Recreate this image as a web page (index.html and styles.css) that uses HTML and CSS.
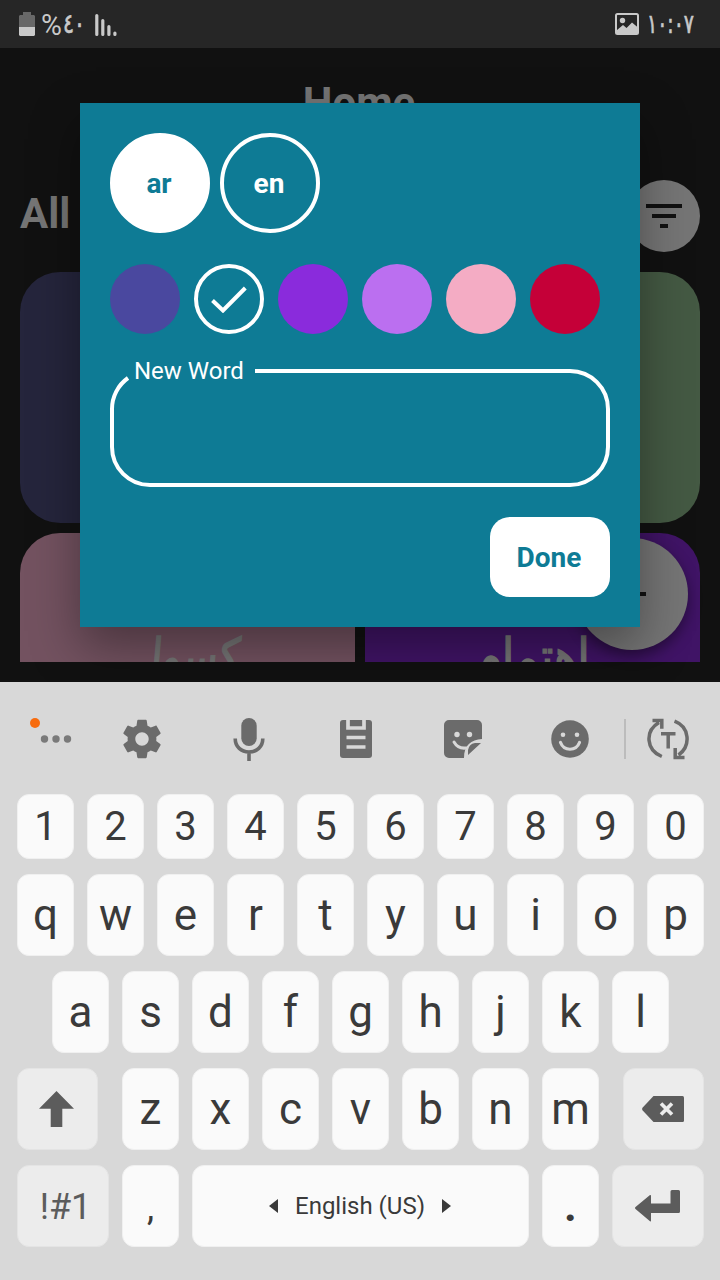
FILE: index.html
```
<!DOCTYPE html>
<html lang="en">
<head>
<meta charset="utf-8">
<title>New Word</title>
<link rel="stylesheet" href="styles.css">
</head>
<body>
<div class="phone">
  <header class="status">
    <div class="status-side">
      <svg class="battery" width="16" height="24" viewBox="0 0 16 24"><path fill="#686868" d="M4 0h8v3h3l1 1v11H0V4l1-1h3z"/><path fill="#c9c9c9" d="M0 15h16v8l-1 1H1l-1-1z"/></svg>
      <span class="percent"><span class="sign">%</span><span class="num">٤٠</span></span>
      <svg class="signal" width="22" height="24" viewBox="0 0 22 24" fill="none" stroke="#c9c9c9" stroke-width="3.2" stroke-linecap="round"><path d="M1.8 2.5v19M7.8 7.500v14M13.900 13.500v8M19.900 20v1.500"/></svg>
    </div>
    <div class="status-side status-right">
      <svg width="24" height="22" viewBox="0 0 24 22"><rect x="1" y="1" width="22" height="20" rx="1.500" fill="none" stroke="#c9c9c9" stroke-width="2"/><circle cx="7.500" cy="7.500" r="2.700" fill="#c9c9c9"/><path fill="#c9c9c9" d="M2 17l6-5 3.500 3L17 9.500l6 5V21H2z"/></svg>
      <span class="clock">١٠:٠٧</span>
    </div>
  </header>

  <main class="app">
    <h1 class="title">Home</h1>
    <div class="heading">
      <h2 class="all">All</h2>
      <div class="filter"><svg width="36" height="24" viewBox="0 0 36 24" fill="#111"><path d="M0 0h36v4H0zM6 10h24v4H6zM14 20h8v4h-8z"/></svg></div>
    </div>
    <div class="cards">
      <div class="card indigo"></div>
      <div class="card green"></div>
      <div class="card pink"><span class="word lazy" lang="ar">كسول</span></div>
      <div class="card purple"><span class="word care" lang="ar">اهتمام</span></div>
    </div>
    <div class="fab"><svg width="28" height="28" viewBox="0 0 28 28" fill="#111"><path d="M12 0h4v12h12v4H16v12h-4V16H0v-4h12z"/></svg></div>

    <section class="dialog">
      <div class="langs">
        <div class="lang selected">ar</div>
        <div class="lang">en</div>
      </div>
      <div class="colors">
        <div class="dot c-indigo"></div>
        <div class="dot checked"><svg width="36" height="27" viewBox="0 0 36 27" fill="none" stroke="#fff" stroke-width="4"><path d="M1.500 14.500l10.500 10L34.300 2"/></svg></div>
        <div class="dot c-violet"></div>
        <div class="dot c-lilac"></div>
        <div class="dot c-pink"></div>
        <div class="dot c-red"></div>
      </div>
      <div class="field">
        <svg width="500" height="118" viewBox="0 0 500 118" fill="none" stroke="#fff" stroke-width="4"><path d="M145 2H460A38 38 0 0 1 498 40V78A38 38 0 0 1 460 116H40A38 38 0 0 1 2 78V40A38 38 0 0 1 18 9"/></svg>
        <label class="label">New Word</label>
      </div>
      <div class="done">Done</div>
    </section>
  </main>

  <section class="keyboard">
    <div class="tools">
      <div class="tool more"><svg width="50" height="40" viewBox="0 0 50 40"><circle cx="9" cy="8" r="5" fill="#f76c0f"/><g fill="#7a7a7a"><circle cx="18.500" cy="24" r="3.700"/><circle cx="30" cy="24" r="3.700"/><circle cx="41.500" cy="24" r="3.700"/></g></svg></div>
      <div class="tool"><svg width="46" height="46" viewBox="0 0 24 24" fill="#6b6b6b"><path d="M19.430 12.980c.04-.32.07-.64.07-.98s-.03-.66-.07-.98l2.110-1.650c.19-.15.24-.42.12-.64l-2-3.460c-.12-.22-.39-.3-.61-.22l-2.490 1c-.52-.4-1.080-.73-1.690-.98l-.38-2.650C14.460 2.180 14.250 2 14 2h-4c-.25 0-.46.18-.49.42l-.38 2.650c-.61.25-1.170.59-1.690.98l-2.490-1c-.23-.09-.49 0-.61.22l-2 3.460c-.13.22-.07.49.12.64l2.110 1.650c-.04.32-.07.65-.07.98s.03.66.07.98l-2.110 1.650c-.19.15-.24.42-.12.64l2 3.460c.12.22.39.3.61.22l2.490-1c.52.4 1.080.73 1.690.98l.38 2.650c.03.24.24.42.49.42h4c.25 0 .46-.18.49-.42l.38-2.650c.61-.25 1.170-.59 1.690-.98l2.490 1c.23.09.49 0 .61-.22l2-3.460c.12-.22.07-.49-.12-.64l-2.110-1.650zM12 15.500c-1.930 0-3.500-1.570-3.500-3.500s1.570-3.500 3.500-3.500 3.500 1.570 3.500 3.500-1.570 3.500-3.500 3.500z"/></svg></div>
      <div class="tool"><svg width="32" height="43" viewBox="0 0 32 43"><rect x="8.300" y="0" width="15.400" height="28" rx="7.700" fill="#6b6b6b"/><path d="M2.200 20.500C2.200 29 8.300 34 16 34s13.800-5 13.800-13.500M16 34v9" fill="none" stroke="#6b6b6b" stroke-width="3.600"/></svg></div>
      <div class="tool"><svg width="32" height="38" viewBox="0 0 32 38"><rect width="32" height="38" rx="3" fill="#6b6b6b"/><path d="M8 0v8h16V0M6.500 17.500h19M6.500 27h19" fill="none" stroke="#d8d8d8" stroke-width="3.700"/></svg></div>
      <div class="tool"><svg width="38" height="38" viewBox="0 0 38 38"><path fill="#6b6b6b" d="M5 0h28a5 5 0 0 1 5 5v14C27 20 20 25 20 38H5a5 5 0 0 1-5-5V5a5 5 0 0 1 5-5zM24 35v-5q1-6 7-7h6z"/><g fill="#d8d8d8"><circle cx="13" cy="14.500" r="2.700"/><circle cx="25.500" cy="14.500" r="2.700"/></g><path d="M10 22q4 7 12 6" fill="none" stroke="#d8d8d8" stroke-width="3" stroke-linecap="round"/></svg></div>
      <div class="tool"><svg width="38" height="38" viewBox="0 0 38 38"><circle cx="19" cy="19" r="18.800" fill="#6b6b6b"/><g fill="#d8d8d8"><circle cx="12" cy="14.700" r="2.300"/><circle cx="26" cy="14.700" r="2.300"/></g><path d="M9.500 22.500C13 31.500 25 31.500 28.500 22.500" fill="none" stroke="#d8d8d8" stroke-width="3.200" stroke-linecap="round"/></svg></div>
      <div class="divider"></div>
      <div class="tool swap"><svg width="42" height="42" viewBox="0 0 42 42" fill="none" stroke="#6b6b6b" stroke-width="3.500"><path d="M14.800 38.500C-1 32-2.500 13 12 4.500M5.500 2.500h9.300v8.300M27.500 3.200C43 9 44 28 31.500 37M37.500 39.500h-9.300v-9.500M14 15.700h14.500M21.200 15.500v15"/></svg></div>
    </div>

    <div class="row digits">
      <div class="key">1</div><div class="key">2</div><div class="key">3</div><div class="key">4</div><div class="key">5</div><div class="key">6</div><div class="key">7</div><div class="key">8</div><div class="key">9</div><div class="key">0</div>
    </div>
    <div class="row">
      <div class="key">q</div><div class="key">w</div><div class="key">e</div><div class="key">r</div><div class="key">t</div><div class="key">y</div><div class="key">u</div><div class="key">i</div><div class="key">o</div><div class="key">p</div>
    </div>
    <div class="row home-row">
      <div class="key">a</div><div class="key">s</div><div class="key">d</div><div class="key">f</div><div class="key">g</div><div class="key">h</div><div class="key">j</div><div class="key">k</div><div class="key">l</div>
    </div>
    <div class="row outer">
      <div class="key fn nudge"><svg width="35" height="36" viewBox="0 0 35 36" fill="#5c5c5c"><path d="M17.500 0L35 17.700H23.300V36H11.700V17.700H0z"/></svg></div>
      <div class="letters"><div class="key">z</div><div class="key">x</div><div class="key">c</div><div class="key">v</div><div class="key">b</div><div class="key">n</div><div class="key">m</div></div>
      <div class="key fn nudge"><svg width="42" height="26" viewBox="0 0 42 26"><path fill="#5c5c5c" d="M11.500 0H40.500Q42 0 42 1.500V24.500Q42 26 40.500 26H11.500L.7 14.500Q-.5 13 .7 11.500z"/><path d="M19 7.500l11 11M30 7.500l-11 11" stroke="#ececec" stroke-width="3.600"/></svg></div>
    </div>
    <div class="row">
      <div class="key fn wide symbols">!#1</div>
      <div class="key comma">,</div>
      <div class="key space">
        <svg width="9" height="14" viewBox="0 0 9 14" fill="#3a3a3a"><path d="M9 0v14L0 7z"/></svg>
        <span>English (US)</span>
        <svg width="9" height="14" viewBox="0 0 9 14" fill="#3a3a3a"><path d="M0 0v14l9-7z"/></svg>
      </div>
      <div class="key period">.</div>
      <div class="key fn wide nudge"><svg class="enter" width="45" height="32" viewBox="0 0 45 32" fill="#5c5c5c"><path d="M.5 17L15 5Q16 4.500 16 6v7.500H35.500V1.500Q35.500 0 37 0h6.500Q45 0 45 1.500v20q0 1.500-1.500 1.500H16v7.500q0 1.500-1 .8L.5 19q-1-1 0-2z"/></svg></div>
    </div>
  </section>
</div>
</body>
</html>
```
FILE: styles.css
```
* { box-sizing: border-box; }
body { margin: 0; font-family: Roboto, "DejaVu Sans", sans-serif; }
svg { display: block; flex: none; }
.phone { width: 720px; height: 1280px; display: flex; flex-direction: column; overflow: hidden; background: #111; }

.status { height: 48px; flex: none; background: #262626; color: #c9c9c9; display: flex; justify-content: space-between; align-items: center; padding: 0 26px 0 19px; }
.status-side { display: flex; align-items: center; height: 48px; }
.percent { display: flex; align-items: center; margin-left: 6px; width: 43px; direction: ltr; }
.sign { font-size: 30px; line-height: 32px; width: 22px; flex: none; padding-top: 1px; transform: scaleX(.95); transform-origin: left; }
.num { font: 27px/30px "DejaVu Sans", sans-serif; unicode-bidi: bidi-override; transform: scaleX(.76); transform-origin: left; -webkit-text-stroke: .7px #c9c9c9; }
.signal { margin: 1px 0 0 11px; }
.clock { font: 27px/30px "DejaVu Sans", sans-serif; width: 47px; margin-left: 8px; direction: ltr; unicode-bidi: bidi-override; white-space: nowrap; transform: scaleX(.7); transform-origin: left; -webkit-text-stroke: .7px #c9c9c9; }

.app { position: relative; height: 634px; flex: none; overflow: hidden; padding: 30px 20px 20px; color: #757575; }
.title { margin: 0; font-size: 42px; line-height: 50px; text-align: center; padding-right: 2px; }
.heading { display: flex; justify-content: space-between; align-items: center; height: 72px; margin-top: 52px; }
.all { margin: 0; font-size: 42px; line-height: 50px; padding-bottom: 4px; }
.filter { width: 72px; height: 72px; border-radius: 50%; background: #757575; display: flex; align-items: center; justify-content: center; }
.cards { display: grid; grid-template-columns: 335px 335px; grid-auto-rows: 251px; gap: 10px; margin-top: 20px; height: 390px; overflow: hidden; }
.card { border-radius: 40px; overflow: hidden; text-align: center; }
.indigo { background: #25253c; }
.green { background: #445943; }
.pink { background: #735260; }
.purple { background: #401466; }
.word { display: inline-block; font: 50px/60px "DejaVu Sans", sans-serif; margin-top: 94px; direction: rtl; white-space: nowrap; -webkit-text-stroke: 1.6px #757575; }
.lazy { transform: translateX(-1px) scaleX(.82) skewX(-6deg); }
.care { transform: scaleX(.88); }
.fab { position: absolute; right: 32px; bottom: 32px; width: 112px; height: 112px; border-radius: 50%; background: #757575; display: flex; align-items: center; justify-content: center; box-shadow: 0 6px 14px rgba(0,0,0,.4); }

.dialog { position: absolute; left: 80px; top: 55px; width: 560px; height: 524px; padding: 30px; background: #0e7b95; color: #fff; display: flex; flex-direction: column; box-shadow: 0 20px 46px rgba(0,0,0,.36); }
.langs { display: flex; gap: 10px; }
.lang { width: 100px; height: 100px; border: 4px solid #fff; border-radius: 50%; display: flex; align-items: center; justify-content: center; font-size: 28px; font-weight: 700; padding-right: 2px; }
.selected { background: #fff; color: #0e7b95; }
.colors { display: flex; gap: 14px; margin-top: 31px; }
.dot { width: 70px; height: 70px; border-radius: 50%; display: flex; align-items: center; justify-content: center; }
.checked { border: 4px solid #fff; }
.c-indigo { background: #4a489f; }
.c-violet { background: #8a2bdc; }
.c-lilac { background: #bb6ff0; }
.c-pink { background: #f4acc4; }
.c-red { background: #c50038; }
.field { position: relative; height: 118px; margin-top: 35px; }
.label { position: absolute; left: 24px; top: -12px; font-size: 24px; line-height: 28px; }
.done { align-self: flex-end; margin-top: 30px; width: 120px; height: 80px; border-radius: 20px; background: #fff; color: #0e7b95; display: flex; align-items: center; justify-content: center; font-size: 28px; font-weight: 700; padding-right: 2px; }

.keyboard { flex: 1; background: #d8d8d8; color: #3a3a3a; display: flex; flex-direction: column; gap: 15px; }
.tools { height: 97px; display: flex; align-items: center; padding-top: 17px; }
.tool { width: 107px; display: flex; justify-content: center; }
.more { width: 88.5px; padding: 0 0 8px 14px; }
.divider { width: 2px; height: 40px; background: #bcbcbc; }
.swap { width: 84px; }
.row { display: flex; gap: 13px; padding: 0 16px 0 17px; height: 82px; font-size: 44px; }
.digits { height: 65px; font-size: 40px; }
.home-row { padding-left: 52px; }
.outer { gap: 24px; }
.letters { display: flex; gap: 13px; }
.key { width: 57px; flex: none; border-radius: 12px; background: #fafafa; border: 1px solid #f0f0f0; display: flex; align-items: center; justify-content: center; }
.fn { width: 81px; background: #ececec; border-color: #e4e4e4; color: #5c5c5c; }
.nudge { padding-right: 2px; }
.wide { width: 92px; }
.symbols { font-size: 36px; padding: 2px 0 0 5px; }
.space { width: 337px; gap: 17px; font-size: 24px; padding-right: 1px; }
.comma { font-size: 36px; padding-top: 4px; }
.period { font-weight: 700; }
.enter { margin-top: -1px; }
```
